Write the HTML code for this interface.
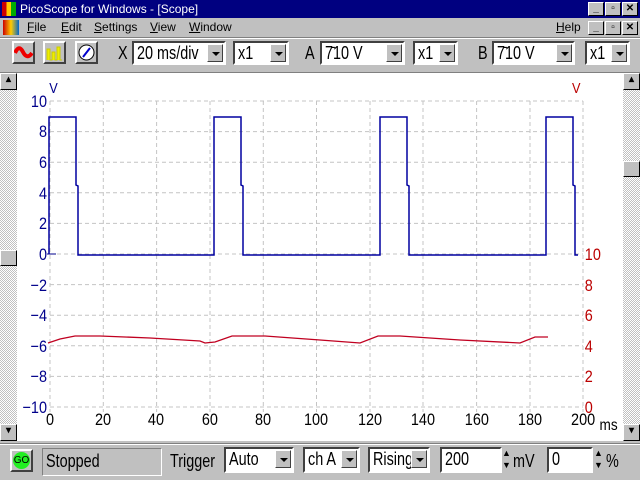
<!DOCTYPE html>
<html><head><meta charset="utf-8"><style>
*{margin:0;padding:0;box-sizing:border-box}
body{width:640px;height:480px;overflow:hidden;background:#c0c0c0;font-family:"Liberation Sans",sans-serif;position:relative}
.a{position:absolute}
.title{left:0;top:0;width:640px;height:18px;background:#000080;color:#fff;font-size:12px;line-height:18px;padding-left:20px}
.menu{top:18px;left:0;width:640px;height:19px;font-size:12px;line-height:19px}
.wb{width:16px;height:14px;background:#c0c0c0;border:1px solid;border-color:#fff #000 #000 #fff;font-size:10px;line-height:12px;text-align:center;color:#000;font-weight:bold}
.sunk{border:1px solid;border-color:#808080 #fff #fff #808080}
.raised{border:2px solid;border-color:#fff #404040 #404040 #fff;background:#c0c0c0}
.combo{background:#fff;border:2px solid;border-color:#404040 #fff #fff #404040;font-size:18px;line-height:20px;padding-left:3px;color:#000;overflow:hidden;white-space:nowrap}
.c{display:inline-block;transform:scaleX(0.8);transform-origin:0 0}
.combo .btn{position:absolute;right:1px;top:1px;width:16px;height:18px;background:#c0c0c0;border:1px solid;border-color:#fff #404040 #404040 #fff}
.combo .btn:after{content:"";position:absolute;left:4px;top:7px;border:4px solid transparent;border-top:4px solid #000;border-bottom:0}
.lbl{font-size:18px;color:#000;transform:scaleX(0.8);transform-origin:0 0}
.sb{background:repeating-conic-gradient(#c0c0c0 0 25%,#fff 0 50%) 0 0/2px 2px}
</style></head><body>
<div class="a title">PicoScope for Windows - [Scope]</div>
<div class="a" style="left:2px;top:2px;width:14px;height:14px;background:linear-gradient(90deg,#c00 0 33%,#fc0 33% 66%,#0a0 66%)"></div>
<div class="a wb" style="left:588px;top:2px">_</div><div class="a wb" style="left:605px;top:2px">▫</div><div class="a wb" style="left:622px;top:2px">✕</div>
<div class="a menu"><span class="a" style="left:3px;top:2px;width:16px;height:15px;background:linear-gradient(90deg,#c00,#fc0,#06c)"></span>
<span class="a" style="left:27px"><u>F</u>ile</span><span class="a" style="left:61px"><u>E</u>dit</span><span class="a" style="left:94px"><u>S</u>ettings</span><span class="a" style="left:150px"><u>V</u>iew</span><span class="a" style="left:189px"><u>W</u>indow</span><span class="a" style="left:556px"><u>H</u>elp</span></div>
<div class="a wb" style="left:588px;top:21px">_</div><div class="a wb" style="left:605px;top:21px">▫</div><div class="a wb" style="left:622px;top:21px">✕</div>
<div class="a" style="left:0;top:37px;width:640px;height:1px;background:#808080"></div>
<div class="a" style="left:0;top:38px;width:640px;height:1px;background:#fff"></div>
<div class="a raised" style="left:12px;top:41px;width:23px;height:23px"><svg width="19" height="19"><path d="M1 10 Q5 1 9 9 T18 10" stroke="#e00" stroke-width="4" fill="none"/></svg></div>
<div class="a raised" style="left:43px;top:41px;width:23px;height:23px"><svg width="19" height="19"><path d="M2 17V6h3v11h2V9h3v8h2V4h3v13h2" fill="#ee0" stroke="#cc0"/></svg></div>
<div class="a raised" style="left:75px;top:41px;width:23px;height:23px"><svg width="19" height="19"><circle cx="9.5" cy="9.5" r="7.5" fill="#fff" stroke="#000"/><path d="M6 14L13 5" stroke="#00c" stroke-width="2"/></svg></div>
<span class="a lbl" style="left:118px;top:43px">X</span>
<div class="a combo" style="left:132px;top:41px;width:94px;height:24px"><span class="c">20 ms/div</span><span class="btn"></span></div>
<div class="a combo" style="left:233px;top:41px;width:56px;height:24px"><span class="c">x1</span><span class="btn"></span></div>
<span class="a lbl" style="left:305px;top:43px">A</span>
<div class="a combo" style="left:320px;top:41px;width:85px;height:24px"><span class="c">7̄10 V</span><span class="btn"></span></div>
<div class="a combo" style="left:413px;top:41px;width:45px;height:24px"><span class="c">x1</span><span class="btn"></span></div>
<span class="a lbl" style="left:478px;top:43px">B</span>
<div class="a combo" style="left:492px;top:41px;width:83px;height:24px"><span class="c">7̄10 V</span><span class="btn"></span></div>
<div class="a combo" style="left:585px;top:41px;width:45px;height:24px"><span class="c">x1</span><span class="btn"></span></div>
<div class="a" style="left:0;top:72px;width:640px;height:1px;background:#808080"></div>
<div class="a" style="left:0;top:73px;width:640px;height:368px;background:#fff"></div>
<div class="a sb" style="left:0;top:73px;width:17px;height:368px"></div>
<div class="a sb" style="left:623px;top:73px;width:17px;height:368px"></div>
<div class="a wb" style="left:0;top:73px;width:17px;height:17px">▴</div>
<div class="a wb" style="left:0;top:424px;width:17px;height:17px">▾</div>
<div class="a wb" style="left:0;top:250px;width:17px;height:16px"></div>
<div class="a wb" style="left:623px;top:73px;width:17px;height:17px">▴</div>
<div class="a wb" style="left:623px;top:424px;width:17px;height:17px">▾</div>
<div class="a wb" style="left:623px;top:161px;width:17px;height:16px"></div>
<svg class="a" style="left:0;top:0" width="640" height="445" font-family="Liberation Sans" font-size="17">
<g stroke="#c4c4c4" stroke-dasharray="4,3" fill="none">
<path d="M50 101H583M50 131.6H583M50 162.2H583M50 192.8H583M50 223.4H583M50 254H583M50 284.6H583M50 315.2H583M50 345.8H583M50 376.4H583M50 407H583"/>
<path d="M50 101V412M103.3 101V412M156.6 101V412M210 101V412M263.3 101V412M316.5 101V412M370 101V412M423 101V412M476.6 101V412M530 101V412M583 101V412"/>
</g>
<g fill="#00008b" text-anchor="end" transform="scale(0.85,1)"><text x="55.3" y="107">10</text><text x="55.3" y="137">8</text><text x="55.3" y="168">6</text><text x="55.3" y="199">4</text><text x="55.3" y="229">2</text><text x="55.3" y="260">0</text><text x="55.3" y="291">−2</text><text x="55.3" y="321">−4</text><text x="55.3" y="352">−6</text><text x="55.3" y="382">−8</text><text x="55.3" y="413">−10</text><text x="68" y="93" font-size="15">V</text></g>
<path d="M47 254H56" stroke="#00008b"/>
<g fill="#b00" transform="scale(0.85,1)"><text x="688" y="260">10</text><text x="688" y="291">8</text><text x="688" y="321">6</text><text x="688" y="352">4</text><text x="688" y="382">2</text><text x="688" y="413">0</text><text x="673" y="93" font-size="15">V</text></g>
<g fill="#000" text-anchor="middle" transform="scale(0.85,1)"><text x="58.8" y="425">0</text><text x="121.2" y="425">20</text><text x="183.5" y="425">40</text><text x="247" y="425">60</text><text x="309.4" y="425">80</text><text x="371.8" y="425">100</text><text x="435.3" y="425">120</text><text x="497.6" y="425">140</text><text x="561" y="425">160</text><text x="623.5" y="425">180</text><text x="686" y="425">200</text><text x="716" y="430" font-size="16">ms</text></g>
<path d="M49 254V117H76V185L78 186V255H214V117H241V185L243 186V255H380V117H407V185L409 186V255H546V117H573V185L575 186V255H578" stroke="#0000a0" stroke-width="1.5" fill="none"/>
<path d="M48 343L60 339L75 336H100L150 338L200 341L205 343L215 342L232 336H265L320 340L360 343L378 336H400L460 340L520 343L535 337H548" stroke="#c00020" stroke-width="1.3" fill="none"/>
</svg>
<div class="a" style="left:0;top:443px;width:640px;height:1px;background:#808080"></div>
<div class="a" style="left:0;top:444px;width:640px;height:1px;background:#fff"></div>
<div class="a raised" style="left:10px;top:449px;width:23px;height:23px"><div class="a" style="left:1px;top:1px;width:17px;height:17px;border-radius:50%;background:#2e2;font-size:10px;line-height:17px;text-align:center">GO</div></div>
<div class="a sunk" style="left:42px;top:448px;width:120px;height:28px;font-size:18px;padding:2px 3px"><span class="c">Stopped</span></div>
<span class="a lbl" style="left:170px;top:451px">Trigger</span>
<div class="a combo" style="left:224px;top:447px;width:70px;height:26px"><span class="c">Auto</span><span class="btn"></span></div>
<div class="a combo" style="left:303px;top:447px;width:57px;height:26px"><span class="c">ch A</span><span class="btn"></span></div>
<div class="a combo" style="left:368px;top:447px;width:62px;height:26px"><span class="c">Rising</span><span class="btn"></span></div>
<div class="a combo" style="left:440px;top:447px;width:62px;height:26px"><span class="c">200</span></div>
<div class="a" style="left:502px;top:447px;width:10px;height:26px;font-size:9px;line-height:12px">▲<br>▼</div>
<span class="a lbl" style="left:513px;top:451px">mV</span>
<div class="a combo" style="left:547px;top:447px;width:46px;height:26px"><span class="c">0</span></div>
<div class="a" style="left:594px;top:447px;width:10px;height:26px;font-size:9px;line-height:12px">▲<br>▼</div>
<span class="a lbl" style="left:606px;top:451px">%</span>
</body></html>
